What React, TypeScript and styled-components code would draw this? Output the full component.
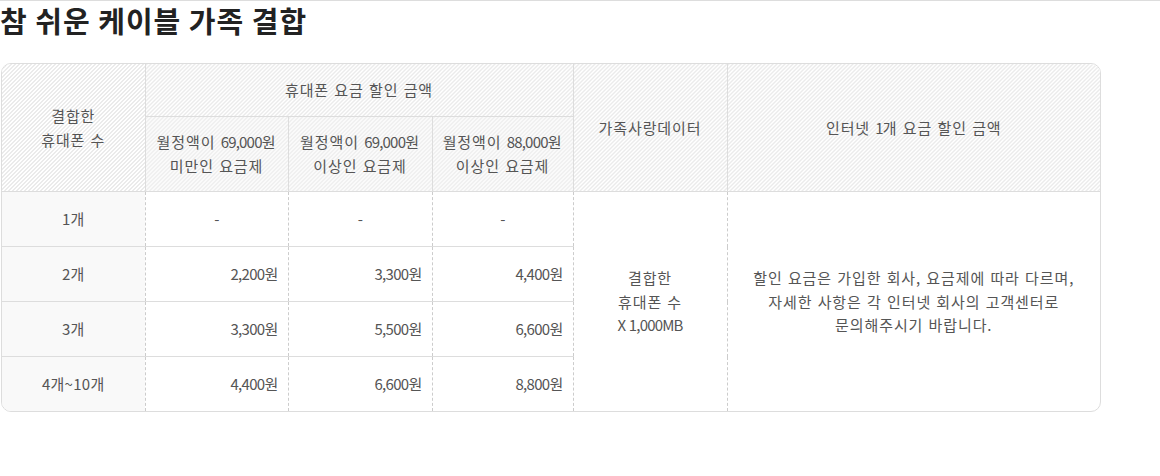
import React from 'react'
import styled, { createGlobalStyle } from 'styled-components'

const GlobalStyle = createGlobalStyle`
  html, body {
    margin: 0;
    padding: 0;
    background: #fff;
  }
  body {
    font-family: "Noto Sans CJK KR", "Noto Sans", sans-serif;
    color: #555;
  }
`

type Row = {
  label: string
  prices: string[]
}

const rows: Row[] = [
  { label: '1개', prices: ['-', '-', '-'] },
  { label: '2개', prices: ['2,200원', '3,300원', '4,400원'] },
  { label: '3개', prices: ['3,300원', '5,500원', '6,600원'] },
  { label: '4개~10개', prices: ['4,400원', '6,600원', '8,800원'] },
]

export default function App() {
  return (
    <>
      <GlobalStyle />
      <Section>
        <Title>참 쉬운 케이블 가족 결합</Title>
        <TableBox>
          <Table>
            <colgroup>
              <col style={{ width: 143 }} />
              <col style={{ width: 143 }} />
              <col style={{ width: 144 }} />
              <col style={{ width: 141 }} />
              <col style={{ width: 154 }} />
              <col />
            </colgroup>
            <thead>
              <tr>
                <Th rowSpan={2}>
                  결합한
                  <br />
                  휴대폰 수
                </Th>
                <Th colSpan={3} $height={52}>
                  휴대폰 요금 할인 금액
                </Th>
                <Th rowSpan={2}>가족사랑데이터</Th>
                <Th rowSpan={2} $last>
                  인터넷 <Num>1</Num>개 요금 할인 금액
                </Th>
              </tr>
              <tr>
                <Th $height={74}>
                  월정액이 <Num>69,000</Num>원
                  <br />
                  미만인 요금제
                </Th>
                <Th>
                  월정액이 <Num>69,000</Num>원
                  <br />
                  이상인 요금제
                </Th>
                <Th>
                  월정액이 <Num>88,000</Num>원
                  <br />
                  이상인 요금제
                </Th>
              </tr>
            </thead>
            <tbody>
              {rows.map((row, i) => (
                <tr key={row.label}>
                  <LabelCell $bottom={i === rows.length - 1}>{row.label}</LabelCell>
                  {row.prices.map((p, j) => (
                    <PriceCell key={j} $dash={p === '-'} $bottom={i === rows.length - 1}>
                      {p}
                    </PriceCell>
                  ))}
                  {i === 0 && (
                    <>
                      <NoteCell rowSpan={4}>
                        결합한
                        <br />
                        휴대폰 수
                        <br />
                        <Num>X 1,000MB</Num>
                      </NoteCell>
                      <NoteCell rowSpan={4} $last>
                        할인 요금은 가입한 회사, 요금제에 따라 다르며,
                        <br />
                        자세한 사항은 각 인터넷 회사의 고객센터로
                        <br />
                        문의해주시기 바랍니다.
                      </NoteCell>
                    </>
                  )}
                </tr>
              ))}
            </tbody>
          </Table>
        </TableBox>
      </Section>
    </>
  )
}

const Section = styled.section`
  width: 100%;
  min-height: 476px;
  border-top: 1px solid #dddddd;
  box-sizing: border-box;
`

const Title = styled.h2`
  margin: 0;
  padding: 0;
  font-size: 29px;
  line-height: 38px;
  font-weight: 700;
  color: #222;
  letter-spacing: 1px;
`

const TableBox = styled.div`
  width: 1100px;
  margin: 24px 0 0 1px;
  box-sizing: border-box;
  border: 1px solid #dddddd;
  border-radius: 10px;
  overflow: hidden;
`

const Table = styled.table`
  width: 100%;
  table-layout: fixed;
  border-collapse: collapse;
  font-size: 15px;
  line-height: 24px;
  color: #555;
  letter-spacing: 0.9px;
  word-spacing: 1px;
`

const Num = styled.span`
  letter-spacing: -0.8px;
  word-spacing: 1px;
`

const Th = styled.th<{ $height?: number; $last?: boolean }>`
  height: ${(p) => (p.$height ? `${p.$height}px` : 'auto')};
  padding: 0 4px;
  font-weight: 400;
  text-align: center;
  vertical-align: middle;
  white-space: nowrap;
  border-right: ${(p) => (p.$last ? 'none' : '1px solid #dddddd')};
  border-bottom: 1px solid #dddddd;
  background-color: #fff;
  background-image: linear-gradient(
    135deg,
    #ebebeb 25%,
    transparent 25%,
    transparent 50%,
    #ebebeb 50%,
    #ebebeb 75%,
    transparent 75%
  );
  background-size: 4px 4px;
`

const LabelCell = styled.td<{ $bottom?: boolean }>`
  height: 54px;
  padding: 0;
  text-align: center;
  letter-spacing: 0.3px;
  background: #f9f9f9;
  border-right: 1px dashed #cccccc;
  border-bottom: ${(p) => (p.$bottom ? 'none' : '1px solid #dddddd')};
`

const PriceCell = styled.td<{ $dash?: boolean; $bottom?: boolean }>`
  height: 54px;
  padding: 0 10px;
  text-align: ${(p) => (p.$dash ? 'center' : 'right')};
  letter-spacing: -0.7px;
  border-right: 1px dashed #cccccc;
  border-bottom: ${(p) => (p.$bottom ? 'none' : '1px solid #dddddd')};
`

const NoteCell = styled.td<{ $last?: boolean }>`
  padding: 0 10px;
  text-align: center;
  vertical-align: middle;
  line-height: 23.5px;
  border-right: ${(p) => (p.$last ? 'none' : '1px dashed #cccccc')};
`
